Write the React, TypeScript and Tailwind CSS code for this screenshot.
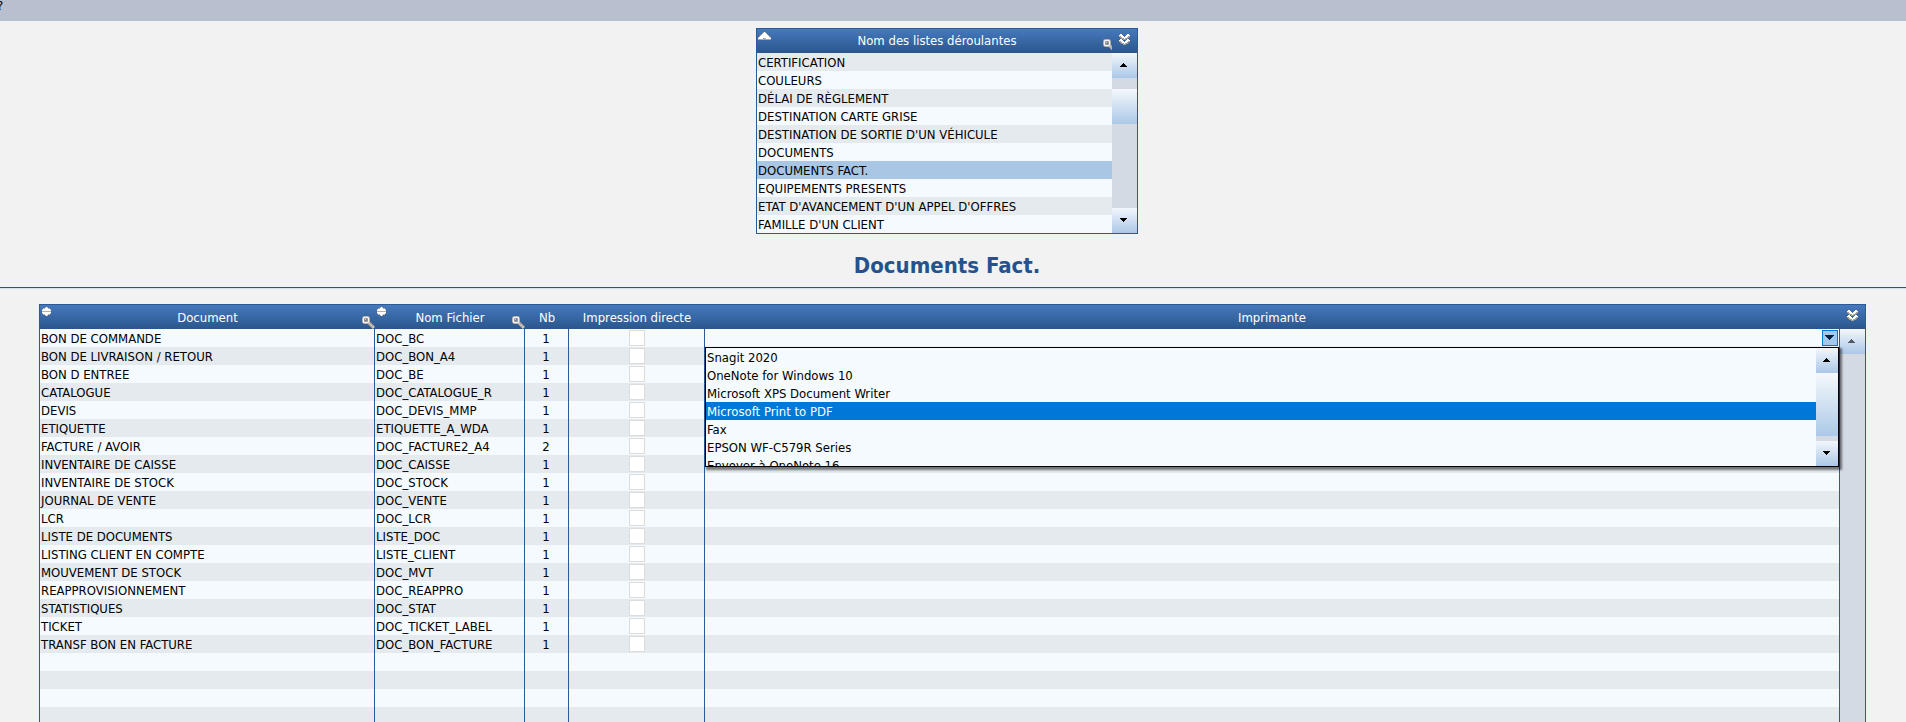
import { useState, type ReactNode } from "react";

const LISTS = [
  "CERTIFICATION",
  "COULEURS",
  "DÉLAI DE RÈGLEMENT",
  "DESTINATION CARTE GRISE",
  "DESTINATION DE SORTIE D'UN VÉHICULE",
  "DOCUMENTS",
  "DOCUMENTS FACT.",
  "EQUIPEMENTS PRESENTS",
  "ETAT D'AVANCEMENT D'UN APPEL D'OFFRES",
  "FAMILLE D'UN CLIENT",
];

const DOCUMENTS = [
  { name: "BON DE COMMANDE", file: "DOC_BC", count: 1 },
  { name: "BON DE LIVRAISON / RETOUR", file: "DOC_BON_A4", count: 1 },
  { name: "BON D ENTREE", file: "DOC_BE", count: 1 },
  { name: "CATALOGUE", file: "DOC_CATALOGUE_R", count: 1 },
  { name: "DEVIS", file: "DOC_DEVIS_MMP", count: 1 },
  { name: "ETIQUETTE", file: "ETIQUETTE_A_WDA", count: 1 },
  { name: "FACTURE / AVOIR", file: "DOC_FACTURE2_A4", count: 2 },
  { name: "INVENTAIRE DE CAISSE", file: "DOC_CAISSE", count: 1 },
  { name: "INVENTAIRE DE STOCK", file: "DOC_STOCK", count: 1 },
  { name: "JOURNAL DE VENTE", file: "DOC_VENTE", count: 1 },
  { name: "LCR", file: "DOC_LCR", count: 1 },
  { name: "LISTE DE DOCUMENTS", file: "LISTE_DOC", count: 1 },
  { name: "LISTING CLIENT EN COMPTE", file: "LISTE_CLIENT", count: 1 },
  { name: "MOUVEMENT DE STOCK", file: "DOC_MVT", count: 1 },
  { name: "REAPPROVISIONNEMENT", file: "DOC_REAPPRO", count: 1 },
  { name: "STATISTIQUES", file: "DOC_STAT", count: 1 },
  { name: "TICKET", file: "DOC_TICKET_LABEL", count: 1 },
  { name: "TRANSF BON EN FACTURE", file: "DOC_BON_FACTURE", count: 1 },
];

const PRINTERS = [
  "Snagit 2020",
  "OneNote for Windows 10",
  "Microsoft XPS Document Writer",
  "Microsoft Print to PDF",
  "Fax",
  "EPSON WF-C579R Series",
  "Envoyer à OneNote 16",
];

const BLANK_ROWS = [0, 1, 2, 3, 4, 5];

const HEADER = "h-6 bg-linear-to-b from-[#4679bd] to-[#2a568c] text-white";
const BUTTON =
  "flex h-[25px] shrink-0 items-center justify-center bg-linear-to-b from-[#f3f7fc] to-[#abc7e7] pr-0.5 pb-px";
const THUMB = "bg-linear-to-b from-[#f6f8fc] to-[#abc9e8]";
const CELL = "h-[18px] border-r border-[#2b5a94] p-0";
const CELL_TEXT = "h-[18px] overflow-hidden pr-0.5 pl-px leading-5 whitespace-nowrap";

function SortAsc() {
  return (
    <svg width="13" height="8" viewBox="0 0 13 8" shapeRendering="crispEdges" aria-hidden="true">
      <path fill="#a9a8a8" d="M5 0h3v1h1v1h1v1h1v1h1v1h1v3H0V5h1V4h1V3h1V2h1V1h1z" />
      <path fill="#fff" d="M6 0h1v1h1v1h1v1h1v1h1v1h1v1h1v1H8V6H5v1H0V6h1V5h1V4h1V3h1V2h1V1h1z" />
    </svg>
  );
}

function SortBoth() {
  return (
    <svg width="9" height="9" viewBox="0 0 9 9" shapeRendering="crispEdges" aria-hidden="true">
      <path fill="#b3b0ac" d="M3 0h3v1h2v1h1v5H8v1H6v1H3V8H1V7H0V2h1V1h2z" />
      <path fill="#fff" d="M4 0h1v1h1v1h2v1h1v1H0V3h1V2h2V1h1zM0 5h9v1H8v1H6v1H5v1H4V8H3V7H1V6H0z" />
    </svg>
  );
}

function Magnifier() {
  return (
    <svg width="13" height="13" viewBox="0 0 13 13" aria-hidden="true">
      <path d="M6.5 6.5l5.5 5.5" stroke="#a39d96" strokeWidth="3.4" />
      <path d="M6.8 6.8l5.2 5.2" stroke="#e6e4e2" strokeWidth="1.4" strokeDasharray="1.6 1" />
      <rect width="8" height="8" rx="2.4" fill="#a8a39d" />
      <rect x="1.5" y="1.5" width="5" height="5" rx="1" fill="#7c8088" stroke="#f4f3f2" strokeWidth="1.4" />
      <rect x="3" y="3" width="1" height="1" fill="#d3d3d3" />
    </svg>
  );
}

function MoreColumns() {
  return (
    <svg width="11" height="11" viewBox="0 0 11 11" shapeRendering="crispEdges" aria-hidden="true">
      <path
        fill="#a5a29f"
        d="M0 2h2v1h1v1h2v1h1V4h2V3h1V2h2v1h-1v1H9v1H7v1H4V5H2V4H1V3H0zM0 7h2v1h1v1h2v1h1V9h2V8h1V7h2v1h-1v1H9v1H7v1H4v-1H2V9H1V8H0z"
      />
      <path
        fill="#fff"
        d="M1 0h2v1h1v1h1v1h1V2h1V1h1V0h2v1h1v1H9v1H8v1H6v1H5V4H3V3H2V2H0V1h1zM1 5h2v1h1v1h1v1h1V7h1V6h1V5h2v1h1v1H9v1H8v1H6v1H5V9H3V8H2V7H0V6h1z"
      />
    </svg>
  );
}

function Triangle({ down = false }: { down?: boolean }) {
  return (
    <svg width="7" height="4" viewBox="0 0 7 4" shapeRendering="crispEdges" fill="currentColor" aria-hidden="true">
      {down ? <path d="M0 0h7v1H6v1H5v1H4v1H3V3H2V2H1V1H0z" /> : <path d="M3 0h1v1h1v1h1v1h1v1H0V3h1V2h1V1h1z" />}
    </svg>
  );
}

function HeaderLabel({ children, left, right }: { children: ReactNode; left?: ReactNode; right?: ReactNode }) {
  return (
    <div className="flex h-6 justify-between">
      <span className="w-[13px] shrink-0 pt-0.5 pl-0.5">{left}</span>
      <span className="leading-[26px] font-normal whitespace-nowrap">{children}</span>
      <span className="flex w-[13px] shrink-0 items-end">{right}</span>
    </div>
  );
}

export default function App() {
  const [selected, setSelected] = useState("DOCUMENTS FACT.");
  const [printer, setPrinter] = useState("Microsoft Print to PDF");

  return (
    <div className="flex h-screen flex-col overflow-hidden bg-[#f2f2f2] font-['DejaVu_Sans_Condensed','DejaVu_Sans',sans-serif] text-[13px] leading-[18px] text-black">
      <nav className="h-[21px] shrink-0 overflow-hidden bg-[#b8c0d0]">
        <button type="button" className="-ml-[3px] block h-3 leading-3" aria-label="?">
          ?
        </button>
      </nav>

      <div className="flex shrink-0 flex-col items-center pt-[7px] pr-3">
        <section className="flex w-[382px] border border-[#2b5a94]">
          <div className="min-w-0 flex-1">
            <div className={`${HEADER} flex justify-between`}>
              <span className="w-3.5 pt-[3px] pl-px">
                <SortAsc />
              </span>
              <h2 className="leading-6">Nom des listes déroulantes</h2>
              <span className="flex w-[9px] items-end overflow-hidden">
                <span className="shrink-0 pb-px">
                  <Magnifier />
                </span>
              </span>
            </div>
            <ul>
              {LISTS.map((item) => (
                <li key={item} className="group">
                  <button
                    type="button"
                    aria-pressed={item === selected}
                    onClick={() => setSelected(item)}
                    className={`block h-[18px] w-full px-px text-left leading-5 whitespace-nowrap ${
                      item === selected ? "bg-[#a9c6e5]" : "group-odd:bg-[#e5eaee] group-even:bg-[#f5faff]"
                    }`}
                  >
                    {item}
                  </button>
                </li>
              ))}
            </ul>
          </div>
          <div className="flex w-[25px] flex-col bg-[#d4dae4]">
            <button type="button" aria-label="Options" className={`${HEADER} flex shrink-0 justify-center pt-[5px]`}>
              <MoreColumns />
            </button>
            <button type="button" aria-label="Monter" className={BUTTON}>
              <Triangle />
            </button>
            <div className={`${THUMB} mt-[11px] h-[35px]`} />
            <button type="button" aria-label="Descendre" className={`${BUTTON} mt-auto`}>
              <Triangle down />
            </button>
          </div>
        </section>
        <h1 className="mt-[18px] mb-[7px] text-[22px] leading-7 font-bold text-[#25528c]">Documents Fact.</h1>
      </div>

      <hr className="h-0.5 shrink-0 border-t border-b border-t-[#2f5482] border-b-[#d3e0ee]" />

      <main className="mt-[15px] mr-10 ml-[39px] flex shrink-0 border border-[#2b5a94]">
        <table className="w-full flex-1 table-fixed border-separate border-spacing-0">
          <colgroup>
            <col className="w-[335px]" />
            <col className="w-[150px]" />
            <col className="w-11" />
            <col className="w-[136px]" />
            <col />
          </colgroup>
          <thead>
            <tr>
              <th className={`${HEADER} p-0`}>
                <HeaderLabel left={<SortBoth />} right={<Magnifier />}>
                  Document
                </HeaderLabel>
              </th>
              <th className={`${HEADER} p-0`}>
                <HeaderLabel left={<SortBoth />} right={<Magnifier />}>
                  Nom Fichier
                </HeaderLabel>
              </th>
              <th className={`${HEADER} p-0`}>
                <HeaderLabel>Nb</HeaderLabel>
              </th>
              <th className={`${HEADER} p-0`}>
                <HeaderLabel>Impression directe</HeaderLabel>
              </th>
              <th className={`${HEADER} p-0`}>
                <HeaderLabel>Imprimante</HeaderLabel>
              </th>
            </tr>
          </thead>
          <tbody>
            {DOCUMENTS.map((doc, index) => (
              <tr key={doc.name} className="odd:bg-[#f5faff] even:bg-[#e5eaee]">
                <td className={CELL}>
                  <div className={CELL_TEXT}>{doc.name}</div>
                </td>
                <td className={CELL}>
                  <div className={CELL_TEXT}>{doc.file}</div>
                </td>
                <td className={CELL}>
                  <div className={`${CELL_TEXT} text-center`}>{doc.count}</div>
                </td>
                <td className={CELL}>
                  <input
                    type="checkbox"
                    aria-label={`Impression directe ${doc.name}`}
                    className="mx-auto block size-4 appearance-none border border-[#dcdcdc] bg-white checked:bg-[#0078d7]"
                  />
                </td>
                <td className="h-[18px] p-0">
                  {index === 0 && (
                    <div className="relative">
                      <div className="flex h-[18px] items-center justify-end pr-px">
                        <button
                          type="button"
                          aria-label="Choisir une imprimante"
                          aria-haspopup="listbox"
                          aria-expanded="true"
                          className="flex size-4 items-center justify-center border border-[#0078d7] bg-[#a3c8ec] pr-px pb-px text-[#0b2240]"
                        >
                          <svg width="9" height="5" viewBox="0 0 9 5" shapeRendering="crispEdges" aria-hidden="true">
                            <path fill="currentColor" d="M0 0h9v1H8v1H7v1H6v1H5v1H4V4H3V3H2V2H1V1H0z" />
                          </svg>
                        </button>
                      </div>
                      <div className="absolute top-[18px] right-0 left-0 z-10 flex h-[120px] border border-black bg-[#f5faff] shadow-[2px_2px_2px_1px_rgba(0,0,0,0.5)]">
                        <ul role="listbox" aria-label="Imprimante" className="min-w-0 flex-1 overflow-hidden">
                          {PRINTERS.map((name) => (
                            <li
                              key={name}
                              role="option"
                              aria-selected={name === printer}
                              onClick={() => setPrinter(name)}
                              className={`h-[18px] px-px leading-5 ${name === printer ? "bg-[#0078d7] text-white" : ""}`}
                            >
                              {name}
                            </li>
                          ))}
                        </ul>
                        <div className="flex w-[22px] flex-col bg-[#d4dae4]">
                          <button type="button" aria-label="Monter" className={BUTTON}>
                            <Triangle />
                          </button>
                          <div className={`${THUMB} h-[63px]`} />
                          <button type="button" aria-label="Descendre" className={`${BUTTON} mt-auto`}>
                            <Triangle down />
                          </button>
                        </div>
                      </div>
                    </div>
                  )}
                </td>
              </tr>
            ))}
            {BLANK_ROWS.map((row) => (
              <tr key={row} className="odd:bg-[#f5faff] even:bg-[#e5eaee]">
                <td className={CELL} />
                <td className={CELL} />
                <td className={CELL} />
                <td className={CELL} />
                <td className="h-[18px] p-0" />
              </tr>
            ))}
          </tbody>
        </table>
        <div className="flex w-[26px] shrink-0 flex-col">
          <button type="button" aria-label="Options" className={`${HEADER} flex shrink-0 justify-center pt-[5px]`}>
            <MoreColumns />
          </button>
          <div className="flex flex-1 flex-col border-l border-[#2b5a94] bg-[#d4dae4]">
            <button type="button" aria-label="Monter" className={`${BUTTON} text-[#555a62]`}>
              <Triangle />
            </button>
          </div>
        </div>
      </main>
    </div>
  );
}
